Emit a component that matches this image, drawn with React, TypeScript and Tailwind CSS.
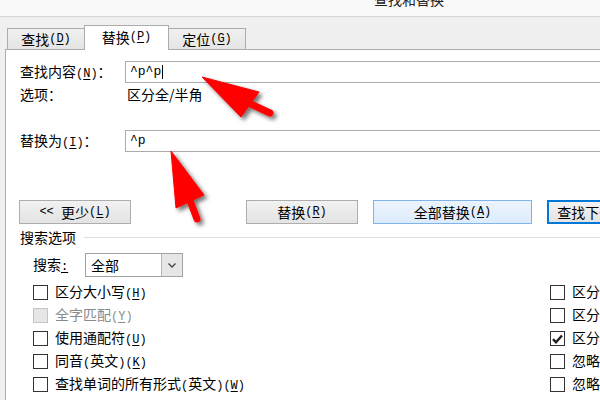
import React from 'react';

const cjk = "font-['Noto_Sans_CJK_SC','Noto_Sans_CJK_JP',sans-serif]";
const mono = "font-['Liberation_Mono',monospace] text-[12px]";

function Key({ k }: { k: string }) {
  return (
    <span className={mono}>
      (<span className="underline underline-offset-2">{k}</span>)
    </span>
  );
}

function P({ children }: { children: React.ReactNode }) {
  return (
    <>
      <span className={mono}>(</span>
      {children}
      <span className={mono}>)</span>
    </>
  );
}

function Box({ checked, disabled }: { checked?: boolean; disabled?: boolean }) {
  return (
    <div
      className={
        'w-[15px] h-[15px] border flex items-center justify-center shrink-0 ' +
        (disabled ? 'bg-[#e6e6e6] border-[#c4c4c4]' : 'bg-white border-[#333333]')
      }
    >
      {checked && (
        <svg width="11" height="10" viewBox="0 0 11 10">
          <path d="M1 5.2 L4 8.3 L10 1.5" fill="none" stroke="#222" strokeWidth="2.4" strokeLinejoin="miter" />
        </svg>
      )}
    </div>
  );
}

function Btn({ children, w, tone }: { children: React.ReactNode; w: string; tone?: 'blue' | 'focus' }) {
  let cls = 'bg-gradient-to-b from-[#f2f2f2] to-[#e3e3e3] border-[#adadad]';
  if (tone === 'blue') cls = 'bg-gradient-to-b from-[#ecf4fc] to-[#dcecfc] border-[#7eb4ea]';
  if (tone === 'focus') cls = 'bg-gradient-to-b from-[#f2f2f2] to-[#e3e3e3] border-[#0078d7] border-2';
  return (
    <div className={`h-[24px] ${w} border ${cls} flex items-center justify-center shrink-0 whitespace-nowrap`}>
      {children}
    </div>
  );
}

const leftRows: { label: React.ReactNode; disabled?: boolean }[] = [
  { label: <>区分大小写<Key k="H" /></> },
  { label: <>全字匹配<Key k="Y" /></>, disabled: true },
  { label: <>使用通配符<Key k="U" /></> },
  { label: <>同音<P>英文</P><Key k="K" /></> },
  { label: <>查找单词的所有形式<P>英文</P><Key k="W" /></> },
];

const rightRows: { label: React.ReactNode; checked?: boolean }[] = [
  { label: <>区分前缀<Key k="X" /></> },
  { label: <>区分后缀<Key k="T" /></> },
  { label: <>区分全/半角<Key k="M" /></>, checked: true },
  { label: <>忽略标点符号<Key k="S" /></> },
  { label: <>忽略空格<Key k="W" /></> },
];

export default function App() {
  return (
    <div className={`relative w-[600px] h-[400px] overflow-hidden bg-[#f0f0f0] text-[14px] leading-[16px] text-black ${cjk}`}>
      {/* title bar, only the bottom of the caption shows */}
      <div className="h-[17px] bg-[#f9f9f9] border-b border-[#d6d6d6] overflow-hidden">
        <div className="pl-[374px] -mt-[9px] text-[#222]">查找和替换</div>
      </div>

      {/* tabs */}
      <div className="h-[32px] flex items-end pl-[7px]">
        <div className="w-[77px] h-[21px] border-l border-t border-[#acacac] bg-gradient-to-b from-[#f0f0f0] to-[#e5e5e5] flex items-center justify-center">
          查找<Key k="D" />
        </div>
        <div className="w-[85px] h-[25px] -mb-px relative z-10 border-l border-t border-r border-[#acacac] bg-white flex items-center justify-center pb-[2px]">
          替换<Key k="P" />
        </div>
        <div className="w-[77px] h-[21px] border-t border-r border-[#acacac] bg-gradient-to-b from-[#f0f0f0] to-[#e5e5e5] flex items-center justify-center">
          定位<Key k="G" />
        </div>
      </div>

      {/* panel */}
      <div className="ml-[5px] w-[720px] h-[351px] bg-white border-l border-t border-[#acacac]">
        <div className="mt-[11px] h-[22px] flex items-center pl-[14px]">
          <div className="w-[105px] shrink-0">查找内容<Key k="N" />：</div>
          <div className="flex-1 h-[22px] border border-[#ababab] flex items-center pl-[4px] font-['Liberation_Mono',monospace] text-[13px]">
            ^p^p<span className="w-px h-[14px] bg-black ml-px" />
          </div>
        </div>
        <div className="h-[22px] flex items-center pl-[14px]">
          <div className="w-[107px] shrink-0">选项：</div>
          <div>区分全/半角</div>
        </div>

        <div className="mt-[25px] h-[22px] flex items-center pl-[14px]">
          <div className="w-[105px] shrink-0">替换为<Key k="I" />：</div>
          <div className="flex-1 h-[22px] border border-[#ababab] flex items-center pl-[4px] font-['Liberation_Mono',monospace] text-[13px]">
            ^p
          </div>
        </div>

        <div className="mt-[48px] flex pl-[13px]">
          <Btn w="w-[112px]"><span className={mono}>&lt;&lt;&nbsp;</span>更少<Key k="L" /></Btn>
          <div className="ml-[115px]"><Btn w="w-[112px]">替换<Key k="R" /></Btn></div>
          <div className="ml-[15px]"><Btn w="w-[159px]" tone="blue">全部替换<Key k="A" /></Btn></div>
          <div className="ml-[15px]"><Btn w="w-[112px]" tone="focus">查找下一处<Key k="F" /></Btn></div>
        </div>

        <div className="mt-[2px] h-[22px] flex items-center pl-[14px]">
          <span>搜索选项</span>
          <div className="flex-1 h-px bg-[#dcdcdc] ml-[8px]" />
        </div>

        <div className="mt-[5px] h-[24px] flex items-center pl-[27px]">
          <div className="w-[52px] shrink-0">
            搜索<span className={`underline underline-offset-2 ${mono}`}>:</span>
          </div>
          <div className="w-[98px] h-[24px] border border-[#a3a3a3] flex">
            <div className="flex-1 flex items-center pl-[5px]">全部</div>
            <div className="w-[21px] border-l border-[#b5b5b5] bg-[#e6e6e6] flex items-center justify-center">
              <svg width="8" height="5" viewBox="0 0 8 5">
                <path d="M0.5 0.5 L4 4 L7.5 0.5" fill="none" stroke="#444" strokeWidth="1.3" />
              </svg>
            </div>
          </div>
        </div>

        <div className="mt-[4px]">
          {leftRows.map((r, i) => (
            <div key={i} className="h-[23px] flex items-center pl-[27px]">
              <div className="w-[517px] flex items-center shrink-0">
                <Box disabled={r.disabled} />
                <span className={'ml-[7px] ' + (r.disabled ? 'text-[#8a8a8a]' : '')}>{r.label}</span>
              </div>
              <div className="flex items-center">
                <Box checked={rightRows[i].checked} />
                <span className="ml-[7px] whitespace-nowrap">{rightRows[i].label}</span>
              </div>
            </div>
          ))}
        </div>
      </div>

      {/* red annotation arrows */}
      <svg className="absolute inset-0 pointer-events-none" width="600" height="400" viewBox="0 0 600 400">
        <defs>
          <filter id="sh" x="-30%" y="-30%" width="160%" height="160%">
            <feDropShadow dx="3" dy="3" stdDeviation="2" floodColor="#000" floodOpacity="0.55" />
          </filter>
        </defs>
        <g filter="url(#sh)" fill="#fe0000" stroke="#fe0000">
          <line x1="240" y1="99" x2="270" y2="113" strokeWidth="7" strokeLinecap="round" />
          <polygon points="202,77 259,92 241,117" strokeWidth="1" strokeLinejoin="round" />
        </g>
        <g filter="url(#sh)" fill="#fe0000" stroke="#fe0000">
          <line x1="186" y1="190" x2="197" y2="219" strokeWidth="7" strokeLinecap="round" />
          <polygon points="171,151 204,195 176,208" strokeWidth="1" strokeLinejoin="round" />
        </g>
      </svg>
    </div>
  );
}
